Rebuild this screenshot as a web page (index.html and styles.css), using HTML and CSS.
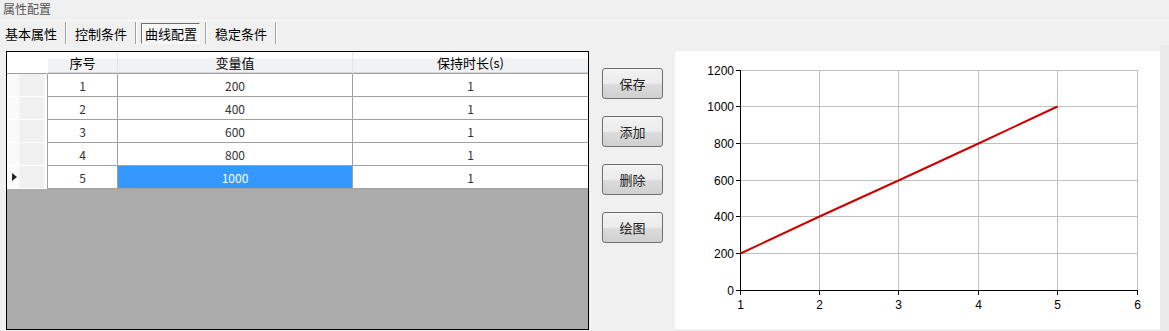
FILE: index.html
```html
<!DOCTYPE html>
<html lang="zh-CN">
<head>
  <meta charset="UTF-8">
  <title>属性配置</title>
  <link rel="stylesheet" href="styles.css">
</head>
<body>

  <div class="title">属性配置</div>

  <!-- tab strip -->
  <div class="tabs">
    <span class="tab first">基本属性</span>
    <span class="tab">控制条件</span>
    <span class="tab active"><span class="tab-box">曲线配置</span></span>
    <span class="tab">稳定条件</span>
  </div>

  <div class="main">

    <div class="grid">
      <div class="grid-row grid-head">
        <div class="rh"></div>
        <div class="cell">序号</div>
        <div class="cell">变量值</div>
        <div class="cell">保持时长(s)</div>
      </div>
      <div class="grid-row">
        <div class="rh"></div>
        <div class="cell">1</div>
        <div class="cell">200</div>
        <div class="cell">1</div>
      </div>
      <div class="grid-row">
        <div class="rh"></div>
        <div class="cell">2</div>
        <div class="cell">400</div>
        <div class="cell">1</div>
      </div>
      <div class="grid-row">
        <div class="rh"></div>
        <div class="cell">3</div>
        <div class="cell">600</div>
        <div class="cell">1</div>
      </div>
      <div class="grid-row">
        <div class="rh"></div>
        <div class="cell">4</div>
        <div class="cell">800</div>
        <div class="cell">1</div>
      </div>
      <div class="grid-row current">
        <div class="rh"><span class="arrow"></span></div>
        <div class="cell">5</div>
        <div class="cell selected">1000</div>
        <div class="cell">1</div>
      </div>
      <div class="grid-empty"></div>
    </div>

    <div class="buttons">
      <button>保存</button>
      <button>添加</button>
      <button>删除</button>
      <button>绘图</button>
    </div>

    <div class="chart">
      <svg width="485" height="278" viewBox="0 0 485 278">
        <!-- grid lines -->
        <g stroke="#bfbfbf" stroke-width="1">
          <line x1="144.5" y1="19" x2="144.5" y2="239" />
          <line x1="223.5" y1="19" x2="223.5" y2="239" />
          <line x1="303.5" y1="19" x2="303.5" y2="239" />
          <line x1="382.5" y1="19" x2="382.5" y2="239" />
          <line x1="462.5" y1="19" x2="462.5" y2="239" />
          <line x1="65" y1="19.5" x2="462" y2="19.5" />
          <line x1="65" y1="55.5" x2="462" y2="55.5" />
          <line x1="65" y1="92.5" x2="462" y2="92.5" />
          <line x1="65" y1="129.5" x2="462" y2="129.5" />
          <line x1="65" y1="165.5" x2="462" y2="165.5" />
          <line x1="65" y1="202.5" x2="462" y2="202.5" />
        </g>
        <!-- axes and ticks -->
        <g stroke="#000" stroke-width="1">
          <line x1="65.5" y1="19" x2="65.5" y2="240" />
          <line x1="61" y1="239.5" x2="463" y2="239.5" />
          <line x1="61" y1="19.5" x2="65" y2="19.5" />
          <line x1="61" y1="55.5" x2="65" y2="55.5" />
          <line x1="61" y1="92.5" x2="65" y2="92.5" />
          <line x1="61" y1="129.5" x2="65" y2="129.5" />
          <line x1="61" y1="165.5" x2="65" y2="165.5" />
          <line x1="61" y1="202.5" x2="65" y2="202.5" />
          <line x1="65.5" y1="239" x2="65.5" y2="244" />
          <line x1="144.5" y1="239" x2="144.5" y2="244" />
          <line x1="223.5" y1="239" x2="223.5" y2="244" />
          <line x1="303.5" y1="239" x2="303.5" y2="244" />
          <line x1="382.5" y1="239" x2="382.5" y2="244" />
          <line x1="462.5" y1="239" x2="462.5" y2="244" />
        </g>
        <g class="axis-label" text-anchor="end">
          <text x="59" y="24">1200</text>
          <text x="59" y="60">1000</text>
          <text x="59" y="97">800</text>
          <text x="59" y="134">600</text>
          <text x="59" y="170">400</text>
          <text x="59" y="207">200</text>
          <text x="59" y="244">0</text>
        </g>
        <g class="axis-label" text-anchor="middle">
          <text x="65.5" y="258">1</text>
          <text x="144.5" y="258">2</text>
          <text x="223.5" y="258">3</text>
          <text x="303.5" y="258">4</text>
          <text x="382.5" y="258">5</text>
          <text x="462.5" y="258">6</text>
        </g>
        <polyline points="65.5,202.5 144.5,165.5 223.5,129.5 303.5,92.5 382.5,55.5" fill="none" stroke="#cc0000" stroke-width="2" />
      </svg>
    </div>

    <div class="edge"></div>
  </div>

</body>
</html>
```

FILE: styles.css
```css
* {
  box-sizing: border-box;
}
body {
  margin: 0;
  width: 1169px;
  height: 331px;
  overflow: hidden;
  background: #f0f0f0;
  font-family: "Noto Sans CJK SC", "Liberation Sans", sans-serif;
  color: #000;
}
.title {
  height: 21px;
  padding-left: 3px;
  font-size: 12px;
  line-height: 17px;
  color: #555;
  border-bottom: 1px solid #fbfbfb;
}
.tabs {
  display: flex;
  align-items: center;
  height: 24px;
  font-size: 13px;
}
.tab {
  display: flex;
  align-items: center;
  height: 22px;
  padding: 0 8px;
  border-right: 1px solid #a0a0a0;
  box-shadow: 1px 0 0 #fff;
  margin-right: 1px;
}
.tab.first {
  padding-left: 5px;
}
.tab.active {
  padding: 0 5px 0 4px;
}
.tab-box {
  display: flex;
  align-items: center;
  height: 21px;
  padding: 0 2px 0 3px;
  border: 1px solid;
  border-color: #6d6d6d #fff #fff #6d6d6d;
  background: #f7f7f7;
}
.main {
  display: flex;
  padding-top: 6px;
  height: 286px;
}
.grid {
  display: flex;
  flex-direction: column;
  width: 583px;
  height: 279px;
  margin-left: 6px;
  border: 1px solid #000;
  font-size: 12px;
}
.grid-row {
  display: grid;
  grid-template-columns: 40px 70px 235px 236px;
  height: 23px;
  background: #fff;
}
.grid-row .cell {
  display: flex;
  align-items: center;
  justify-content: center;
  border-left: 1px solid #a0a0a0;
  border-bottom: 1px solid #a0a0a0;
  color: #333;
}
.grid-row .rh {
  display: flex;
  align-items: center;
  padding-left: 5px;
  background: linear-gradient(to right, #fafafa 0, #fafafa 12px, #f0f0f0 13px, #f0f0f0 37px, #fff 38px);
  border-bottom: 1px solid #fff;
}
.grid-head {
  height: 22px;
}
.grid-head .cell {
  font-size: 13px;
  color: #000;
  background: linear-gradient(#fff 0, #fff 6px, #f1f2f4 7px, #f1f2f4);
  border-left: 1px solid #e6e6e6;
  border-bottom: 1px solid #a0a0a0;
  box-shadow: inset 0 -1px 0 #d8d8d8;
}
.grid-head .rh {
  background: #fff;
  border-bottom: 1px solid #a0a0a0;
}
.grid-head .cell:nth-child(2) {
  border-left: 1px solid #fff;
}
.cell.selected {
  background: #3399ff;
  color: #fff;
}
.arrow {
  width: 0;
  height: 0;
  border-top: 4px solid transparent;
  border-bottom: 4px solid transparent;
  border-left: 5px solid #222;
}
.grid-empty {
  flex: 1;
  background: #ababab;
}
.buttons {
  display: flex;
  flex-direction: column;
  gap: 17px;
  margin-left: 13px;
  padding-top: 17px;
}
button {
  width: 61px;
  height: 31px;
  padding: 0;
  border: 1px solid #707070;
  border-radius: 3px;
  background: linear-gradient(#f2f2f2 0, #ebebeb 50%, #dddddd 50%, #cfcfcf 100%);
  font-family: "Noto Sans CJK SC", sans-serif;
  font-size: 13px;
  color: #222;
}
.chart {
  width: 485px;
  height: 278px;
  margin-left: 12px;
  background: #fff;
}
.chart svg {
  display: block;
}
.axis-label {
  font-family: "Liberation Sans", Arial, sans-serif;
  font-size: 12px;
  fill: #000;
}
.edge {
  width: 9px;
  margin-top: -6px;
  height: 292px;
  background: #eaeaea;
}
```
